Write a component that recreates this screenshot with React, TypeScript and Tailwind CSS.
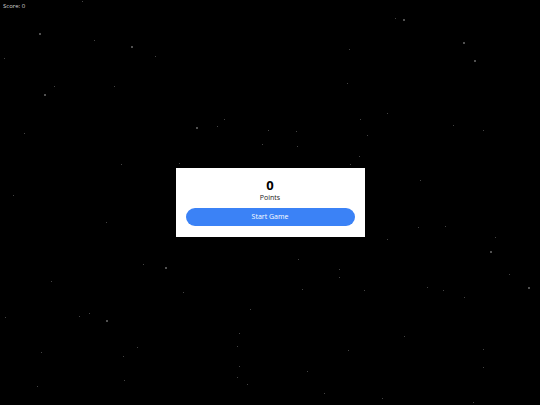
const stars: [number, number, number][] = [
  [39, 33, 2], [94, 40, 1], [131, 46, 2], [155, 56, 1], [4, 58, 1], [54, 86, 1],
  [44, 94, 2], [114, 86, 1], [24, 133, 1], [196, 127, 2], [217, 126, 1], [224, 119, 1],
  [262, 144, 1], [268, 130, 1], [179, 163, 1], [13, 195, 1], [82, 1, 1], [121, 164, 1],
  [395, 18, 1], [403, 19, 2], [463, 42, 2], [474, 60, 2], [349, 49, 1], [347, 83, 1],
  [387, 113, 1], [360, 119, 1], [367, 135, 1], [453, 125, 1], [483, 130, 1], [296, 131, 1],
  [297, 146, 1], [359, 156, 1], [350, 164, 1], [420, 180, 1], [106, 222, 1], [165, 267, 2],
  [143, 264, 1], [51, 281, 1], [183, 292, 1], [250, 309, 1], [5, 317, 1], [79, 316, 1],
  [89, 313, 1], [106, 320, 2], [137, 347, 1], [41, 352, 1], [123, 356, 1], [124, 380, 1],
  [37, 386, 1], [237, 346, 1], [239, 366, 1], [247, 384, 1], [239, 333, 1], [237, 377, 1],
  [418, 227, 1], [445, 226, 1], [387, 239, 1], [490, 251, 2], [495, 237, 1], [298, 259, 1],
  [339, 269, 1], [339, 277, 1], [302, 289, 1], [364, 290, 1], [427, 287, 1], [443, 290, 1],
  [464, 297, 1], [509, 274, 1], [528, 287, 2], [404, 336, 1], [348, 350, 1], [483, 349, 1],
  [483, 367, 1], [307, 371, 1], [324, 393, 1], [382, 398, 1], [473, 402, 1],
];

export default function App() {
  return (
    <div
      className="relative w-full h-[405px] bg-black overflow-hidden flex items-center justify-center"
      style={{ fontFamily: '"Open Sans", "Noto Sans", sans-serif' }}
    >
      {/* starfield */}
      {stars.map(([x, y, s], i) => (
        <div
          key={i}
          className={`absolute rounded-full ${s === 2 ? "w-[2px] h-[2px] bg-[#6b6b6b]" : "w-px h-px bg-[#5a5a5a]"}`}
          style={{ left: x, top: y }}
        />
      ))}

      <div className="absolute left-[3px] top-[2px] text-[6px] leading-[8px] text-[#d4d4d4]">
        Score: 0
      </div>

      {/* start panel */}
      <div className="relative w-[189px] bg-white px-[10px] pt-[9px] pb-[11px] flex flex-col items-center">
        <div className="text-[13px] leading-[16px] font-bold text-black">0</div>
        <div className="text-[7px] leading-[10px] text-[#222]">Points</div>
        <button className="mt-[5px] w-full h-[18px] rounded-full bg-[#3b82f6] text-white text-[7px] leading-[10px]">
          Start Game
        </button>
      </div>
    </div>
  );
}
